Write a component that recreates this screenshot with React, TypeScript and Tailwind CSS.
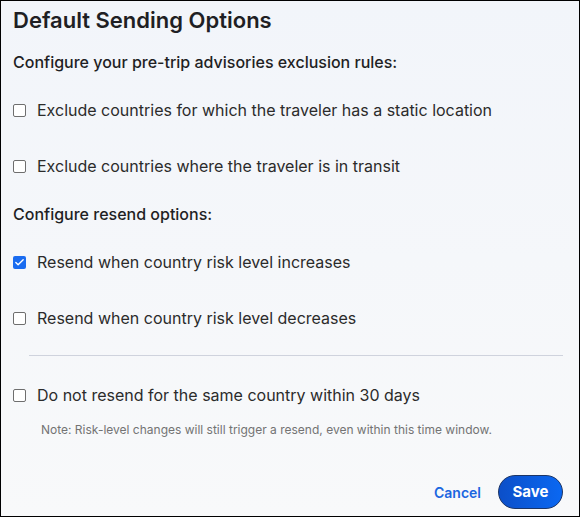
import { Check } from 'lucide-react'

function Box({ checked, label }: { checked?: boolean; label: string }) {
  return (
    <label className="flex items-center gap-[11px] text-[16px] leading-[20px] text-[#2b2b2b]">
      {checked ? (
        <span className="w-[13px] h-[13px] rounded-[2px] bg-[#1a6cf0] flex items-center justify-center">
          <Check className="w-[11px] h-[11px] text-white" strokeWidth={3} />
        </span>
      ) : (
        <span className="w-[13px] h-[13px] rounded-[2px] border border-[#6e6e6e] bg-white" />
      )}
      <span>{label}</span>
    </label>
  )
}

export default function App() {
  return (
    <div
      className="w-[580px] h-[517px] border border-black bg-gradient-to-b from-[#f2f5fa] to-[#f8f9fa] flex flex-col px-[12px]"
      style={{ fontFamily: 'Inter, "Noto Sans", sans-serif' }}
    >
      <h1 className="text-[22px] font-semibold text-[#1f1f24] mt-[5px] leading-[28px]">Default Sending Options</h1>

      <p className="text-[16px] font-medium text-[#1f1f24] mt-[18px] leading-[20px]">Configure your pre-trip advisories exclusion rules:</p>

      <div className="mt-[28px] flex flex-col gap-[36px]">
        <Box label="Exclude countries for which the traveler has a static location" />
        <Box label="Exclude countries where the traveler is in transit" />
      </div>

      <p className="text-[16px] font-medium text-[#1f1f24] mt-[28px] leading-[20px]">Configure resend options:</p>

      <div className="mt-[28px] flex flex-col gap-[36px]">
        <Box checked label="Resend when country risk level increases" />
        <Box label="Resend when country risk level decreases" />
      </div>

      <div className="ml-[16px] mr-[4px] mt-[27px] border-t border-[#cfd3dd]" />

      <div className="mt-[29px]">
        <Box label="Do not resend for the same country within 30 days" />
      </div>
      <p className="ml-[28px] mt-[17px] text-[12px] leading-[16px] text-[#737373]">
        Note: Risk-level changes will still trigger a resend, even within this time window.
      </p>

      <div className="mt-auto mb-[7px] flex items-center justify-end gap-[17px] pr-[4px]">
        <button className="text-[14px] font-semibold text-[#1a66e0]">Cancel</button>
        <button className="h-[34px] w-[65px] rounded-full border border-[#1c3566] bg-gradient-to-r from-[#0c4fc8] to-[#0a68f2] text-white text-[15px] font-bold">
          Save
        </button>
      </div>
    </div>
  )
}
